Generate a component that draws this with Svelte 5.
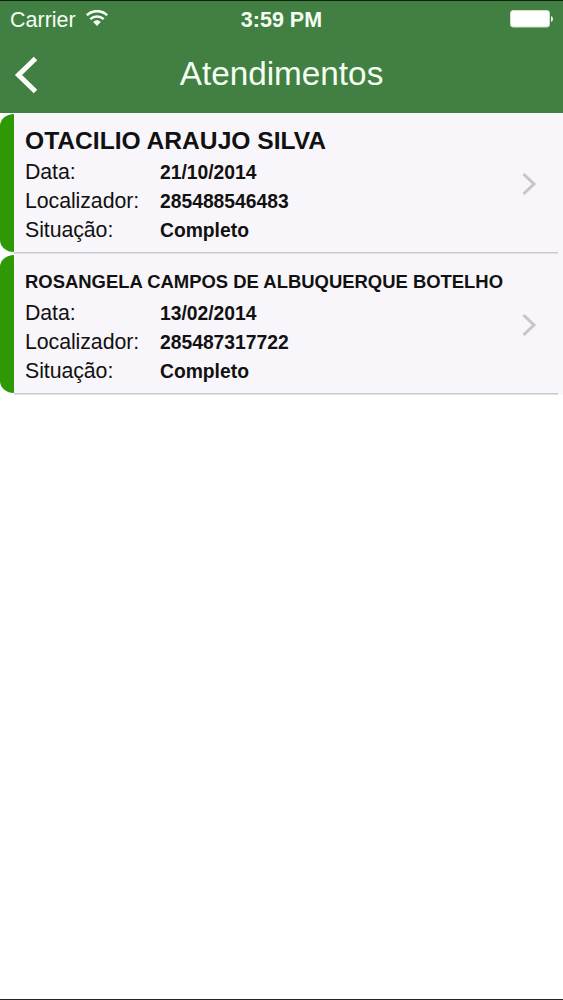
<script lang="ts">
  type Atendimento = {
    nome: string;
    data: string;
    localizador: string;
    situacao: string;
    compact?: boolean;
  };

  const atendimentos: Atendimento[] = [
    {
      nome: "OTACILIO ARAUJO SILVA",
      data: "21/10/2014",
      localizador: "285488546483",
      situacao: "Completo",
    },
    {
      nome: "ROSANGELA CAMPOS DE ALBUQUERQUE BOTELHO",
      data: "13/02/2014",
      localizador: "285487317722",
      situacao: "Completo",
      compact: true,
    },
  ];
</script>

<div class="screen">
  <header>
    <div class="status">
      <div class="carrier">
        <span>Carrier</span>
        <svg width="22" height="17" viewBox="0 0 22 17" fill="none" stroke="#f4fff2">
          <path d="M.8 5.2C6.6 -.2 15.4 -.2 21.2 5.2" stroke-width="2.6" />
          <path d="M4.3 9.2C8.2 5.6 13.8 5.6 17.7 9.2" stroke-width="2.5" />
          <path d="M7.2 12C9.4 9.7 12.6 9.7 14.8 12L11 15.9Z" fill="#f4fff2" stroke="none" />
        </svg>
      </div>
      <span class="time">3:59 PM</span>
      <svg class="battery" width="43" height="18" viewBox="0 0 43 18">
        <rect x=".5" y=".5" width="39" height="16.5" rx="2.5" fill="#fff" stroke="#c9e5c6" />
        <path d="M41 6Q43 6.5 43 9T41 12Z" fill="#e4f5e1" />
      </svg>
    </div>
    <nav>
      <button aria-label="Voltar">
        <svg width="24" height="38" viewBox="0 0 24 38" fill="none" stroke="#fcfff9" stroke-width="5">
          <path d="M21.5 2.5L4.5 19L21.5 35.5" />
        </svg>
      </button>
      <h1>Atendimentos</h1>
    </nav>
  </header>

  <ul>
    {#each atendimentos as item}
      <li>
        <div class="bar"></div>
        <div class="content">
          <h2 class:compact={item.compact}>{item.nome}</h2>
          <dl>
            <dt>Data:</dt>
            <dd>{item.data}</dd>
            <dt>Localizador:</dt>
            <dd>{item.localizador}</dd>
            <dt>Situação:</dt>
            <dd>{item.situacao}</dd>
          </dl>
        </div>
        <svg class="chevron" width="15" height="24" viewBox="0 0 15 24" fill="none" stroke="#c6c5c9" stroke-width="3">
          <path d="M1.5 2L12 12L1.5 22" />
        </svg>
      </li>
    {/each}
  </ul>
</div>

<style>
  :global(body) {
    margin: 0;
    background: #fff;
  }
  .screen {
    box-sizing: border-box;
    height: 1000px;
    overflow: hidden;
    border-top: 1px solid #10200f;
    border-bottom: 1px solid #242424;
    background: #fff;
    color: #111;
    font-family: "Liberation Sans", Arial, sans-serif;
  }
  header {
    height: 112px;
    background: #427f43;
    color: #f4fff2;
  }
  .status {
    display: grid;
    grid-template-columns: 1fr auto 1fr;
    align-items: center;
    height: 36px;
    padding: 0 10px;
    font-size: 21.5px;
  }
  .carrier {
    display: flex;
    align-items: center;
    gap: 10px;
  }
  .carrier span,
  .time {
    padding-top: 2px;
  }
  .carrier svg {
    margin-bottom: 2px;
  }
  .time {
    font-weight: bold;
  }
  .battery {
    justify-self: end;
  }
  nav {
    display: grid;
    grid-template-columns: 60px 1fr 60px;
    align-items: center;
    height: 76px;
  }
  button {
    display: flex;
    padding: 0 0 0 14px;
    border: none;
    background: none;
  }
  h1 {
    margin: 0;
    font-size: 33.3px;
    font-weight: normal;
    line-height: 74px;
    text-align: center;
    height: 76px;
  }
  ul {
    margin: 0;
    padding: 0;
    list-style: none;
  }
  li {
    display: flex;
    height: 141px;
    background:
      linear-gradient(#cbcacd, #cbcacd) 14px 139px / 544px 1.5px no-repeat,
      linear-gradient(#f8f6fa, #f8f6fa) 14px 0 no-repeat;
  }
  .bar {
    width: 14px;
    height: 138px;
    margin-top: 1px;
    border-radius: 14px 0 0 14px / 12px 0 0 12px;
    background: #2e9905;
  }
  .content {
    flex: 1;
    padding: 14px 0 0 11px;
  }
  h2 {
    height: 31px;
    margin: 0;
    font-size: 24.6px;
    line-height: 28px;
    white-space: nowrap;
  }
  h2.compact {
    font-size: 18.45px;
  }
  dl {
    display: grid;
    grid-template-columns: 135px 1fr;
    grid-template-rows: 29px 29px 28px;
    align-items: baseline;
    margin: 0;
    line-height: 28px;
  }
  dt {
    font-size: 21.3px;
    letter-spacing: -0.06px;
  }
  dd {
    margin: 0;
    font-size: 19.3px;
    font-weight: bold;
  }
  .chevron {
    margin: 59px 26px 0 0;
  }
</style>
